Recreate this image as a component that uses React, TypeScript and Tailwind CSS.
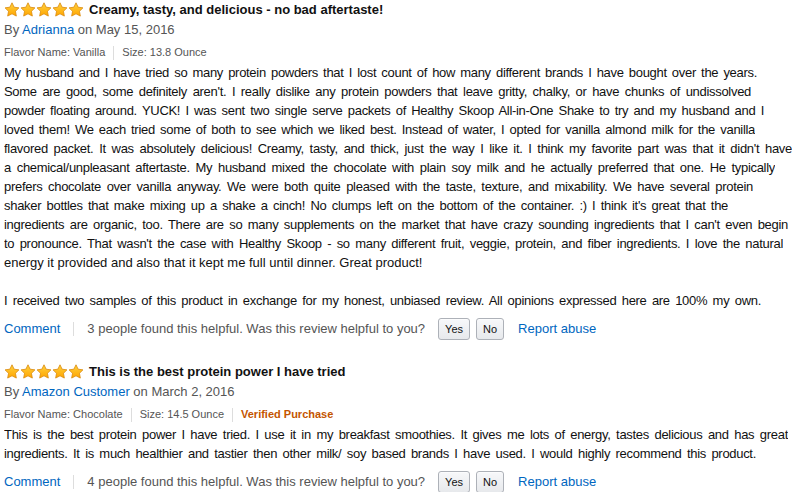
import React from 'react';

interface Line {
    text: string;
    // fixed width class so the line ends where it does in the original layout
    w?: string;
}

interface Review {
    title: string;
    author: string;
    date: string;
    flavor: string;
    size: string;
    verified?: boolean;
    lines: Line[];
    helpful: number;
}

const reviews: Review[] = [
    {
        title: 'Creamy, tasty, and delicious - no bad aftertaste!',
        author: 'Adrianna',
        date: 'May 15, 2016',
        flavor: 'Vanilla',
        size: '13.8 Ounce',
        lines: [
            { text: 'My husband and I have tried so many protein powders that I lost count of how many different brands I have bought over the years.', w: 'w-[753px]' },
            { text: "Some are good, some definitely aren't. I really dislike any protein powders that leave gritty, chalky, or have chunks of undissolved", w: 'w-[747px]' },
            { text: 'powder floating around. YUCK! I was sent two single serve packets of Healthy Skoop All-in-One Shake to try and my husband and I', w: 'w-[760px]' },
            { text: 'loved them! We each tried some of both to see which we liked best. Instead of water, I opted for vanilla almond milk for the vanilla', w: 'w-[751px]' },
            { text: "flavored packet. It was absolutely delicious! Creamy, tasty, and thick, just the way I like it. I think my favorite part was that it didn't have", w: 'w-[788px]' },
            { text: 'a chemical/unpleasant aftertaste. My husband mixed the chocolate with plain soy milk and he actually preferred that one. He typically', w: 'w-[771px]' },
            { text: 'prefers chocolate over vanilla anyway. We were both quite pleased with the taste, texture, and mixability. We have several protein', w: 'w-[749px]' },
            { text: "shaker bottles that make mixing up a shake a cinch! No clumps left on the bottom of the container. :) I think it's great that the", w: 'w-[724px]' },
            { text: "ingredients are organic, too. There are so many supplements on the market that have crazy sounding ingredients that I can't even begin", w: 'w-[784px]' },
            { text: "to pronounce. That wasn't the case with Healthy Skoop - so many different fruit, veggie, protein, and fiber ingredients. I love the natural", w: 'w-[779px]' },
            { text: 'energy it provided and also that it kept me full until dinner. Great product!' },
            { text: '' },
            { text: 'I received two samples of this product in exchange for my honest, unbiased review. All opinions expressed here are 100% my own.', w: 'w-[757px]' },
        ],
        helpful: 3,
    },
    {
        title: 'This is the best protein power I have tried',
        author: 'Amazon Customer',
        date: 'March 2, 2016',
        flavor: 'Chocolate',
        size: '14.5 Ounce',
        verified: true,
        lines: [
            { text: 'This is the best protein power I have tried. I use it in my breakfast smoothies. It gives me lots of energy, tastes delicious and has great', w: 'w-[784px]' },
            { text: 'ingredients. It is much healthier and tastier then other milk/ soy based brands I have used. I would highly recommend this product.', w: 'w-[752px]' },
        ],
        helpful: 4,
    },
];

const Star: React.FC = () => (
    <svg viewBox="0 0 24 24" className="w-[16px] h-[16px]">
        <defs>
            <linearGradient id="starFill" x1="0" y1="0" x2="0" y2="1">
                <stop offset="0%" stopColor="#ffd23f" />
                <stop offset="100%" stopColor="#ffa500" />
            </linearGradient>
        </defs>
        <path
            d="M12 1.2l3.2 6.6 7.2 1-5.2 5.1 1.3 7.2L12 17.7l-6.5 3.4 1.3-7.2-5.2-5.1 7.2-1z"
            fill="url(#starFill)"
            stroke="#d9890b"
            strokeWidth="1.2"
            strokeLinejoin="round"
        />
    </svg>
);

const Sep: React.FC<{ className?: string }> = ({ className }) => (
    <span className={`inline-block w-px h-[14px] bg-[#ddd] ${className ?? ''}`} />
);

const HelpButton: React.FC<{ label: string }> = ({ label }) => (
    <button className="h-[22px] px-[6px] text-[11px] text-[#111] border border-[#adb1b8] rounded-[3px] bg-linear-to-b from-[#f7f8fa] to-[#e7e9ec] shadow-[0_1px_0_rgba(255,255,255,0.6)_inset]">
        {label}
    </button>
);

const ReviewItem: React.FC<{ review: Review; className?: string }> = ({ review, className }) => (
    <div className={className}>
        <div className="flex items-center h-[20px]">
            <div className="flex">
                {[0, 1, 2, 3, 4].map(i => (
                    <Star key={i} />
                ))}
            </div>
            <span className="ml-[5px] font-bold text-[13px] text-[#111]">{review.title}</span>
        </div>
        <div className="text-[13px] leading-[19px] text-[#555]">
            By <a className="text-[#0066c0]">{review.author}</a> on {review.date}
        </div>
        <div className="mt-[6px] flex items-center h-[15px] text-[11px] text-[#555]">
            <span>Flavor Name: {review.flavor}</span>
            <Sep className="mx-[8px]" />
            <span>Size: {review.size}</span>
            {review.verified && (
                <>
                    <Sep className="mx-[8px]" />
                    <span className="font-bold text-[#c45500]">Verified Purchase</span>
                </>
            )}
        </div>
        <div className="mt-[3px] text-[13px] leading-[19px] text-[#111]">
            {review.lines.map((line, i) =>
                line.w ? (
                    <div key={i} className={`h-[19px] overflow-hidden tracking-[-0.3px] text-justify [text-align-last:justify] ${line.w}`}>
                        {line.text}
                    </div>
                ) : (
                    <div key={i} className="h-[19px] whitespace-nowrap">{line.text}</div>
                )
            )}
        </div>
        <div className="mt-[8px] flex items-center h-[22px] text-[13px]">
            <a className="text-[#0066c0]">Comment</a>
            <Sep className="mx-[13px]" />
            <span className="text-[#555]">
                {review.helpful} people found this helpful. Was this review helpful to you?
            </span>
            <div className="ml-[13px] flex gap-[6px]">
                <HelpButton label="Yes" />
                <HelpButton label="No" />
            </div>
            <a className="ml-[14px] text-[#0066c0]">Report abuse</a>
        </div>
    </div>
);

const App: React.FC = () => {
    return (
        <div className="w-[793px] h-[492px] overflow-hidden bg-white pl-[4px] font-['Liberation_Sans',Arial,sans-serif]">
            <ReviewItem review={reviews[0]} />
            <ReviewItem review={reviews[1]} className="mt-[22px]" />
        </div>
    );
};

export default App;
